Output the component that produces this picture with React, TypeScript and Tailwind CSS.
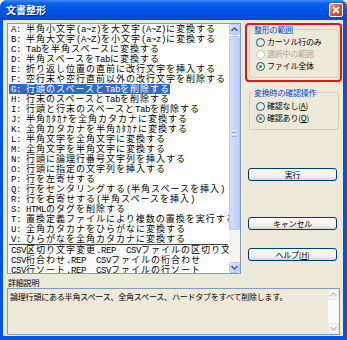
import React from 'react';

const items = [
  'A: 半角小文字(a~z)を大文字(A~Z)に変換する',
  'B: 半角大文字(A~Z)を小文字(a~z)に変換する',
  'C: Tabを半角スペースに変換する',
  'D: 半角スペースをTabに変換する',
  'E: 折り返し位置の直前に改行文字を挿入する',
  'F: 空行末や空行直前以外の改行文字を削除する',
  'G: 行頭のスペースとTabを削除する',
  'H: 行末のスペースとTabを削除する',
  'I: 行頭と行末のスペースとTabを削除する',
  'J: 半角ｶﾀｶﾅを全角カタカナに変換する',
  'K: 全角カタカナを半角ｶﾀｶﾅに変換する',
  'L: 半角文字を全角文字に変換する',
  'M: 全角文字を半角文字に変換する',
  'N: 行頭に論理行番号文字列を挿入する',
  'O: 行頭に指定の文字列を挿入する',
  'P: 行を左寄せする',
  'Q: 行をセンタリングする(半角スペースを挿入)',
  'R: 行を右寄せする(半角スペースを挿入)',
  'S: HTMLのタグを削除する',
  'T: 置換定義ファイルにより複数の置換を実行する',
  'U: 全角カタカナをひらがなに変換する',
  'V: ひらがなを全角カタカナに変換する',
];

const csvItems = [
  'CSV区切り文字変更.REP  CSVファイルの区切り文字変更',
  'CSV桁合わせ.REP  CSVファイルの桁合わせ',
  'CSV行ソート.REP  CSVファイルの行ソート',
  'CSV行番号.REP  CSVファイルの行番号',
];

// half-width latin in a mono face, everything else in the CJK face
const Mixed = ({ text }: { text: string }) => {
  const parts = text.match(/[\x20-\x7e]+|[^\x20-\x7e]+/g) || [];
  return (
    <>
      {parts.map((p, i) =>
        /^[\x20-\x7e]+$/.test(p) ? (
          <span key={i} className="font-['Liberation_Mono',monospace] tracking-[-0.4px]">
            {p}
          </span>
        ) : (
          <span key={i} className="tracking-[1px]">
            {p}
          </span>
        )
      )}
    </>
  );
};

const Arrow = ({ up, color }: { up?: boolean; color: string }) => (
  <svg width="7" height="5" viewBox="0 0 7 5">
    <path
      d={up ? 'M0.5 4 L3.5 1 L6.5 4' : 'M0.5 1 L3.5 4 L6.5 1'}
      fill="none"
      stroke={color}
      strokeWidth="1.6"
    />
  </svg>
);

const Radio = ({ checked, disabled }: { checked?: boolean; disabled?: boolean }) => (
  <div
    className={`w-[9px] h-[9px] rounded-full border flex items-center justify-center shrink-0 ${
      disabled
        ? 'border-[#CAC8BB] bg-white'
        : 'border-[#1C5180] bg-[linear-gradient(135deg,#dcdcd6,#ffffff)]'
    }`}
  >
    {checked && <div className="w-[3px] h-[3px] rounded-full bg-[#21A121]" />}
  </div>
);

const RadioRow = ({
  children,
  checked,
  disabled,
}: {
  children: React.ReactNode;
  checked?: boolean;
  disabled?: boolean;
}) => (
  <div className="h-[12px] flex items-center gap-[2px]">
    <Radio checked={checked} disabled={disabled} />
    <span className={`leading-[10px] ${disabled ? 'text-[#ACA899]' : 'text-black'}`}>{children}</span>
  </div>
);

const Button = ({ children, className }: { children: React.ReactNode; className?: string }) => (
  <div
    className={`w-[89px] h-[13px] border border-[#003C74] rounded-[3px] bg-[linear-gradient(to_bottom,#ffffff,#f0efe9_70%,#d8d2c6)] flex items-center justify-center text-black leading-[9px] ${className}`}
  >
    {children}
  </div>
);

export default function App() {
  return (
    <div className="relative w-[347px] h-[340px] bg-[#0553E1] rounded-t-[7px] flex flex-col overflow-hidden font-['Noto_Sans_CJK_JP',sans-serif]">
      {/* title bar */}
      <div className="h-[20px] flex items-center pl-[6px] pr-[4px] bg-[linear-gradient(to_bottom,#3d8cf8_0%,#0a5ff0_18%,#0055e5_60%,#0048d8_100%)]">
        <span className="text-white font-bold text-[10px] leading-[10px] [text-shadow:1px_1px_#0a1f7d]">
          文書整形
        </span>
        <div className="ml-auto w-[14px] h-[14px] rounded-[2px] border border-white bg-[linear-gradient(135deg,#f09a7e,#e0552f_50%,#c33a16)] flex items-center justify-center">
          <svg width="8" height="8" viewBox="0 0 8 8">
            <path d="M1 1 L7 7 M7 1 L1 7" stroke="white" strokeWidth="1.8" />
          </svg>
        </div>
      </div>

      {/* body */}
      <div className="flex-1 mx-[3px] mr-[4px] mb-[4px] bg-[#ECE9D8] pt-[3px] pl-[4px] pr-[3px] flex flex-col text-[8px] tracking-[-0.2px]">
        <div className="flex h-[251px]">
          {/* list */}
          <div className="w-[234px] h-full border border-[#7F9DB9] bg-white flex">
            <div className="flex-1 overflow-hidden pl-[1px] text-[9px] leading-[10px] tracking-normal whitespace-pre text-black">
              {items.map((t, i) => (
                <div key={t} className="h-[10px]">
                  <span
                    className={`inline-block h-[10px] pl-[2px] ${
                      i === 6 ? 'bg-[#316AC5] text-white' : ''
                    }`}
                  >
                    <Mixed text={t} />
                  </span>
                </div>
              ))}
              <div className="h-[1px] bg-[#404040] mr-[1px]" />
              {csvItems.map((t) => (
                <div key={t} className="h-[10px] pl-[2px]">
                  <Mixed text={t} />
                </div>
              ))}
            </div>
            {/* scrollbar */}
            <div className="w-[11px] h-full flex flex-col bg-[#F4F3EE]">
              <div className="h-[11px] rounded-[2px] border border-[#B4C8F6] bg-[linear-gradient(135deg,#dce6fd,#b9cdfa)] flex items-center justify-center">
                <Arrow up color="#4D6185" />
              </div>
              <div className="mt-[1px] h-[194px] rounded-[2px] border border-[#B4C8F6] bg-[linear-gradient(to_right,#d0ddfd,#c1d3fb)] flex flex-col items-center justify-center gap-[1px]">
                <div className="w-[5px] h-[1px] bg-[#EEF4FE]" />
                <div className="w-[5px] h-[1px] bg-[#8CB0F8]" />
                <div className="w-[5px] h-[1px] bg-[#EEF4FE]" />
                <div className="w-[5px] h-[1px] bg-[#8CB0F8]" />
              </div>
              <div className="flex-1" />
              <div className="h-[11px] rounded-[2px] border border-[#B4C8F6] bg-[linear-gradient(135deg,#dce6fd,#b9cdfa)] flex items-center justify-center">
                <Arrow color="#4D6185" />
              </div>
            </div>
          </div>

          {/* right column */}
          <div className="ml-[7px] w-[91px] flex flex-col">
            <fieldset className="ml-[1px] w-[90px] mt-[2px] border border-[#D0D0BF] rounded-[3px]">
              <legend className="ml-[3px] px-[1px] text-[#0046D5] leading-[9px]">整形の範囲</legend>
              <div className="pl-[6px] pt-[2px] pb-[5px]">
                <RadioRow>カーソル行のみ</RadioRow>
                <RadioRow disabled>選択中の範囲</RadioRow>
                <RadioRow checked>ファイル全体</RadioRow>
              </div>
            </fieldset>
            <fieldset className="ml-[1px] w-[90px] mt-[10px] border border-[#D0D0BF] rounded-[3px]">
              <legend className="ml-[3px] px-[1px] text-[#0046D5] leading-[9px]">変換時の確認操作</legend>
              <div className="pl-[6px] pt-[3px] pb-[5px]">
                <RadioRow>
                  確認なし(<u>A</u>)
                </RadioRow>
                <RadioRow checked>
                  確認あり(<u>Q</u>)
                </RadioRow>
              </div>
            </fieldset>
            <Button className="mt-[38px]">実行</Button>
            <Button className="mt-[36px]">キャンセル</Button>
            <Button className="mt-[18px]">
              ヘルプ(<u>H</u>)
            </Button>
          </div>
        </div>

        <div className="mt-[4px] h-[10px] leading-[10px] pl-[1px] text-black">詳細説明</div>

        {/* description */}
        <div className="h-[47px] border border-[#7F9DB9] bg-[#ECE9D8] flex">
          <div className="flex-1 pl-[2px] pt-[3px] leading-[10px] text-black">
            論理行頭にある半角スペース、全角スペース、ハードタブをすべて削除します。
          </div>
          <div className="w-[11px] h-full flex flex-col bg-[#FBFBF8]">
            <div className="h-[11px] rounded-[2px] border border-[#E8E6DA] bg-[#F7F6F0] flex items-center justify-center">
              <Arrow up color="#C9C7BA" />
            </div>
            <div className="flex-1" />
            <div className="h-[11px] rounded-[2px] border border-[#E8E6DA] bg-[#F7F6F0] flex items-center justify-center">
              <Arrow color="#C9C7BA" />
            </div>
          </div>
        </div>
      </div>

      {/* red annotation */}
      <div className="absolute left-[245px] top-[23px] w-[97px] h-[59px] border-2 border-[#E4161B] rounded-[4px]" />
    </div>
  );
}
